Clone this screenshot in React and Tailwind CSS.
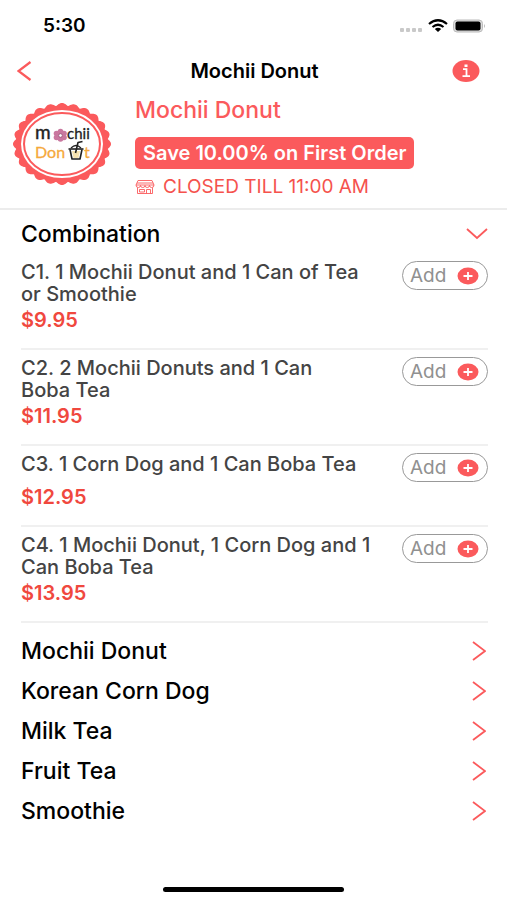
import React, { useState } from "react";

const combos = [
  { id: 1, name: "C1. 1 Mochii Donut and 1 Can of Tea\nor Smoothie", price: "$9.95" },
  { id: 2, name: "C2. 2 Mochii Donuts and 1 Can\nBoba Tea", price: "$11.95" },
  { id: 3, name: "C3. 1 Corn Dog and 1 Can Boba Tea", price: "$12.95" },
  { id: 4, name: "C4. 1 Mochii Donut, 1 Corn Dog and 1\nCan Boba Tea", price: "$13.95" },
];

const categories = ["Mochii Donut", "Korean Corn Dog", "Milk Tea", "Fruit Tea", "Smoothie"];

// wavy edge of the badge
const badgeEdge = () => {
  const points = [];
  for (let i = 0; i <= 360; i += 1) {
    const a = (i * Math.PI) / 180;
    const wave = Math.abs(Math.cos(a * 12)) * 3;
    points.push(`${50 + (46 + wave) * Math.cos(a)},${42 + (38 + wave) * Math.sin(a)}`);
  }
  return points.join(" ");
};

const Logo = () => (
  <svg viewBox="0 0 100 84" className="w-[100px] h-[84px] mt-[6px] shrink-0" role="img" aria-label="Mochii Donut logo">
    <polygon points={badgeEdge()} fill="#fb5a5c" />
    <ellipse cx="50" cy="42" rx="41" ry="34" fill="#fff" />
    <ellipse cx="50" cy="42" rx="38" ry="31" fill="none" stroke="#fb5a5c" strokeWidth="2" />
    <g fontFamily="Lato, sans-serif">
      <text x="23" y="37" fontSize="19" fill="#222" stroke="#222" strokeWidth="0.4">m</text>
      <text x="55" y="37" fontSize="15" fill="#222" stroke="#222" strokeWidth="0.3">chii</text>
      <text x="23" y="56" fontSize="16" fill="#f5a93b" stroke="#f5a93b" strokeWidth="0.3">Don</text>
      <text x="72" y="56" fontSize="16" fill="#f5a93b" stroke="#f5a93b" strokeWidth="0.3">t</text>
    </g>
    <g fill="#c9789f">
      <circle cx="44.5" cy="31.500" r="2.800" />
      <circle cx="44.5" cy="35.500" r="2.800" />
      <circle cx="48.5" cy="29.500" r="2.800" />
      <circle cx="52" cy="31.500" r="2.800" />
      <circle cx="52" cy="35.500" r="2.800" />
      <circle cx="48.5" cy="37" r="2.800" />
      <ellipse cx="48.5" cy="33.500" rx="4.500" ry="4" />
    </g>
    <circle cx="48.5" cy="33.500" r="1.800" fill="#fff" stroke="#8d4a70" strokeWidth="0.7" />
    <path d="M60 49 L61.500 56 H66.500 L68 49 Z" fill="#f7e3b0" />
    <g fill="none" stroke="#222" strokeWidth="1.6" strokeLinejoin="round">
      <path d="M58 47.500 L60 57 H68 L70 47.500" />
      <path d="M56.500 47 H71.500" />
      <path d="M59 46 Q64 41 69 46" strokeWidth="1.2" />
      <path d="M63.500 51 L66 40.500 L70.500 39.500" />
    </g>
  </svg>
);

const StoreIcon = () => (
  <svg viewBox="0 0 20 16" className="w-5 h-4 shrink-0" fill="none" stroke="#fb5a5c" strokeWidth="0.9" aria-hidden="true">
    <path d="M3 1.500 H17 L19 6 H1 Z M2 4 H18" />
    <path d="M1 6 Q1 8.500 3.300 8.500 Q5.500 8.500 5.500 6.500 Q5.500 8.500 7.800 8.500 Q10 8.500 10 6.500 Q10 8.500 12.200 8.500 Q14.500 8.500 14.500 6.500 Q14.500 8.500 16.700 8.500 Q19 8.500 19 6" />
    <path d="M2.500 8.500 V14.500 H17.500 V8.500 M4.500 10.500 H9.500 V13 H4.500 Z M11.500 14.500 V10.500 H15.500 V14.500" />
  </svg>
);

const StatusBar = () => (
  <div className="flex items-center justify-between h-[52px] pl-[43px] pr-[21px]">
    <span className="text-[19px] leading-6 font-semibold">5:30</span>
    <svg viewBox="0 0 88 16" className="w-[88px] h-4" aria-hidden="true">
      <g fill="#c9c9c9">
        <rect x="2" y="10" width="4" height="4" rx="1" />
        <rect x="8" y="10" width="4" height="4" rx="1" />
        <rect x="14" y="10" width="4" height="4" rx="1" />
        <rect x="20" y="10" width="4" height="4" rx="1" />
      </g>
      <g fill="none" stroke="#000" strokeWidth="2.200">
        <path d="M31 6 Q40 -1.500 49 6" />
        <path d="M34.500 9 Q40 4.500 45.500 9" />
      </g>
      <path d="M36.800 11 Q40 8.500 43.200 11 L40 14 Z" fill="#000" />
      <rect x="55.500" y="2" width="29" height="12" rx="3.500" fill="#ddd" stroke="#bbb" />
      <rect x="57.500" y="3.500" width="25" height="9" rx="2" fill="#000" />
      <path d="M86 6 Q88 8 86 10 Z" fill="#bbb" />
    </svg>
  </div>
);

const ComboItem = ({ item, onAdd }) => (
  <li className="pt-[7px] pb-4 border-b-2 border-[#f0f0f0]">
    <div className="flex items-start justify-between">
      <h3 className="text-[20px] leading-[22px] font-medium text-[#444] whitespace-pre-line">{item.name}</h3>
      <button
        type="button"
        onClick={() => onAdd(item)}
        className="flex items-center justify-between w-[86px] h-[29px] pl-[7px] pr-2 shrink-0 rounded-full border border-[#999] text-[19px] leading-5 text-[#909090]"
      >
        Add
        <svg viewBox="0 0 22 18" className="w-[22px] h-[18px]" aria-hidden="true">
          <ellipse cx="11" cy="9" rx="10.500" ry="8.500" fill="#fb5a5c" />
          <path d="M6.500 9 H15.500 M11 5 V13" stroke="#fff" strokeWidth="1.800" />
        </svg>
      </button>
    </div>
    <p className="mt-[3px] text-[20px] leading-6 font-semibold text-[#f0483e]">{item.price}</p>
  </li>
);

const App = () => {
  const [open, setOpen] = useState(true);
  const [cart, setCart] = useState([]);

  const handleAdd = (item) => {
    setCart((prev) => [...prev, item.id]);
  };

  return (
    <div className="flex flex-col min-h-screen bg-white text-black font-[Inter,'Liberation_Sans',sans-serif]" data-count={cart.length}>
      <StatusBar />

      <nav className="grid grid-cols-[1fr_auto_1fr] items-center h-[38px] pl-[17px] pr-[27px]">
        <button type="button" aria-label="Back" className="justify-self-start">
          <svg viewBox="0 0 16 20" className="w-4 h-5" fill="none" stroke="#fb5a5c" strokeWidth="2.200">
            <path d="M13.500 1 L1.500 10 L13.500 19" />
          </svg>
        </button>
        <h1 className="pl-3 text-[20px] leading-6 font-semibold">Mochii Donut</h1>
        <button type="button" aria-label="Information" className="justify-self-end">
          <svg viewBox="0 0 28 22" className="w-7 h-[22px]">
            <ellipse cx="14" cy="11" rx="13.500" ry="11" fill="#fb5a5c" />
            <rect x="12.500" y="4.500" width="3" height="2.500" fill="#fff" />
            <path d="M11 9.200 H14.500 V16.200 M10.500 16.200 H18" fill="none" stroke="#fff" strokeWidth="1.800" />
          </svg>
        </button>
      </nav>

      <header className="flex items-start gap-[23px] pl-3 pt-[6px] pb-[9px] border-b-2 border-[#ececec]">
        <Logo />
        <div className="flex flex-col items-start">
          <h2 className="text-[23px] leading-7 font-medium text-[#fb5a5c]">Mochii Donut</h2>
          <p className="mt-[13px] px-2 rounded-[5px] bg-[#fb5a5c] text-[20px] leading-8 font-semibold text-white whitespace-nowrap">
            Save 10.00% on First Order
          </p>
          <p className="flex items-center gap-2 mt-[6px] text-[19px] leading-6 text-[#f5524d] whitespace-nowrap">
            <StoreIcon />
            CLOSED TILL 11:00 AM
          </p>
        </div>
      </header>

      <main className="pl-[21px] pr-[19px] grow">
        <button
          type="button"
          onClick={() => setOpen(!open)}
          aria-expanded={open}
          className="flex items-center justify-between w-full pt-2 pb-1 text-[23px] leading-8 font-medium"
        >
          Combination
          <svg viewBox="0 0 22 12" className="w-[22px] h-3" fill="none" stroke="#fb5a5c" strokeWidth="1.800">
            <path d="M1 1 L11 10 L21 1" />
          </svg>
        </button>
        {open && (
          <ul>
            {combos.map((item) => (
              <ComboItem key={item.id} item={item} onAdd={handleAdd} />
            ))}
          </ul>
        )}

        <div className="pt-2">
          {categories.map((name) => (
            <button
              key={name}
              type="button"
              className="flex items-center justify-between w-full h-10 pr-[2px] text-[23px] leading-7 font-medium"
            >
              {name}
              <svg viewBox="0 0 14 20" className="w-[14px] h-5" fill="none" stroke="#fb5a5c" strokeWidth="1.800">
                <path d="M1 1 L13 10 L1 19" />
              </svg>
            </button>
          ))}
        </div>
      </main>

      <div className="w-[181px] h-[5px] mb-2 mx-auto rounded-full bg-black" />
    </div>
  );
};

export default App;
